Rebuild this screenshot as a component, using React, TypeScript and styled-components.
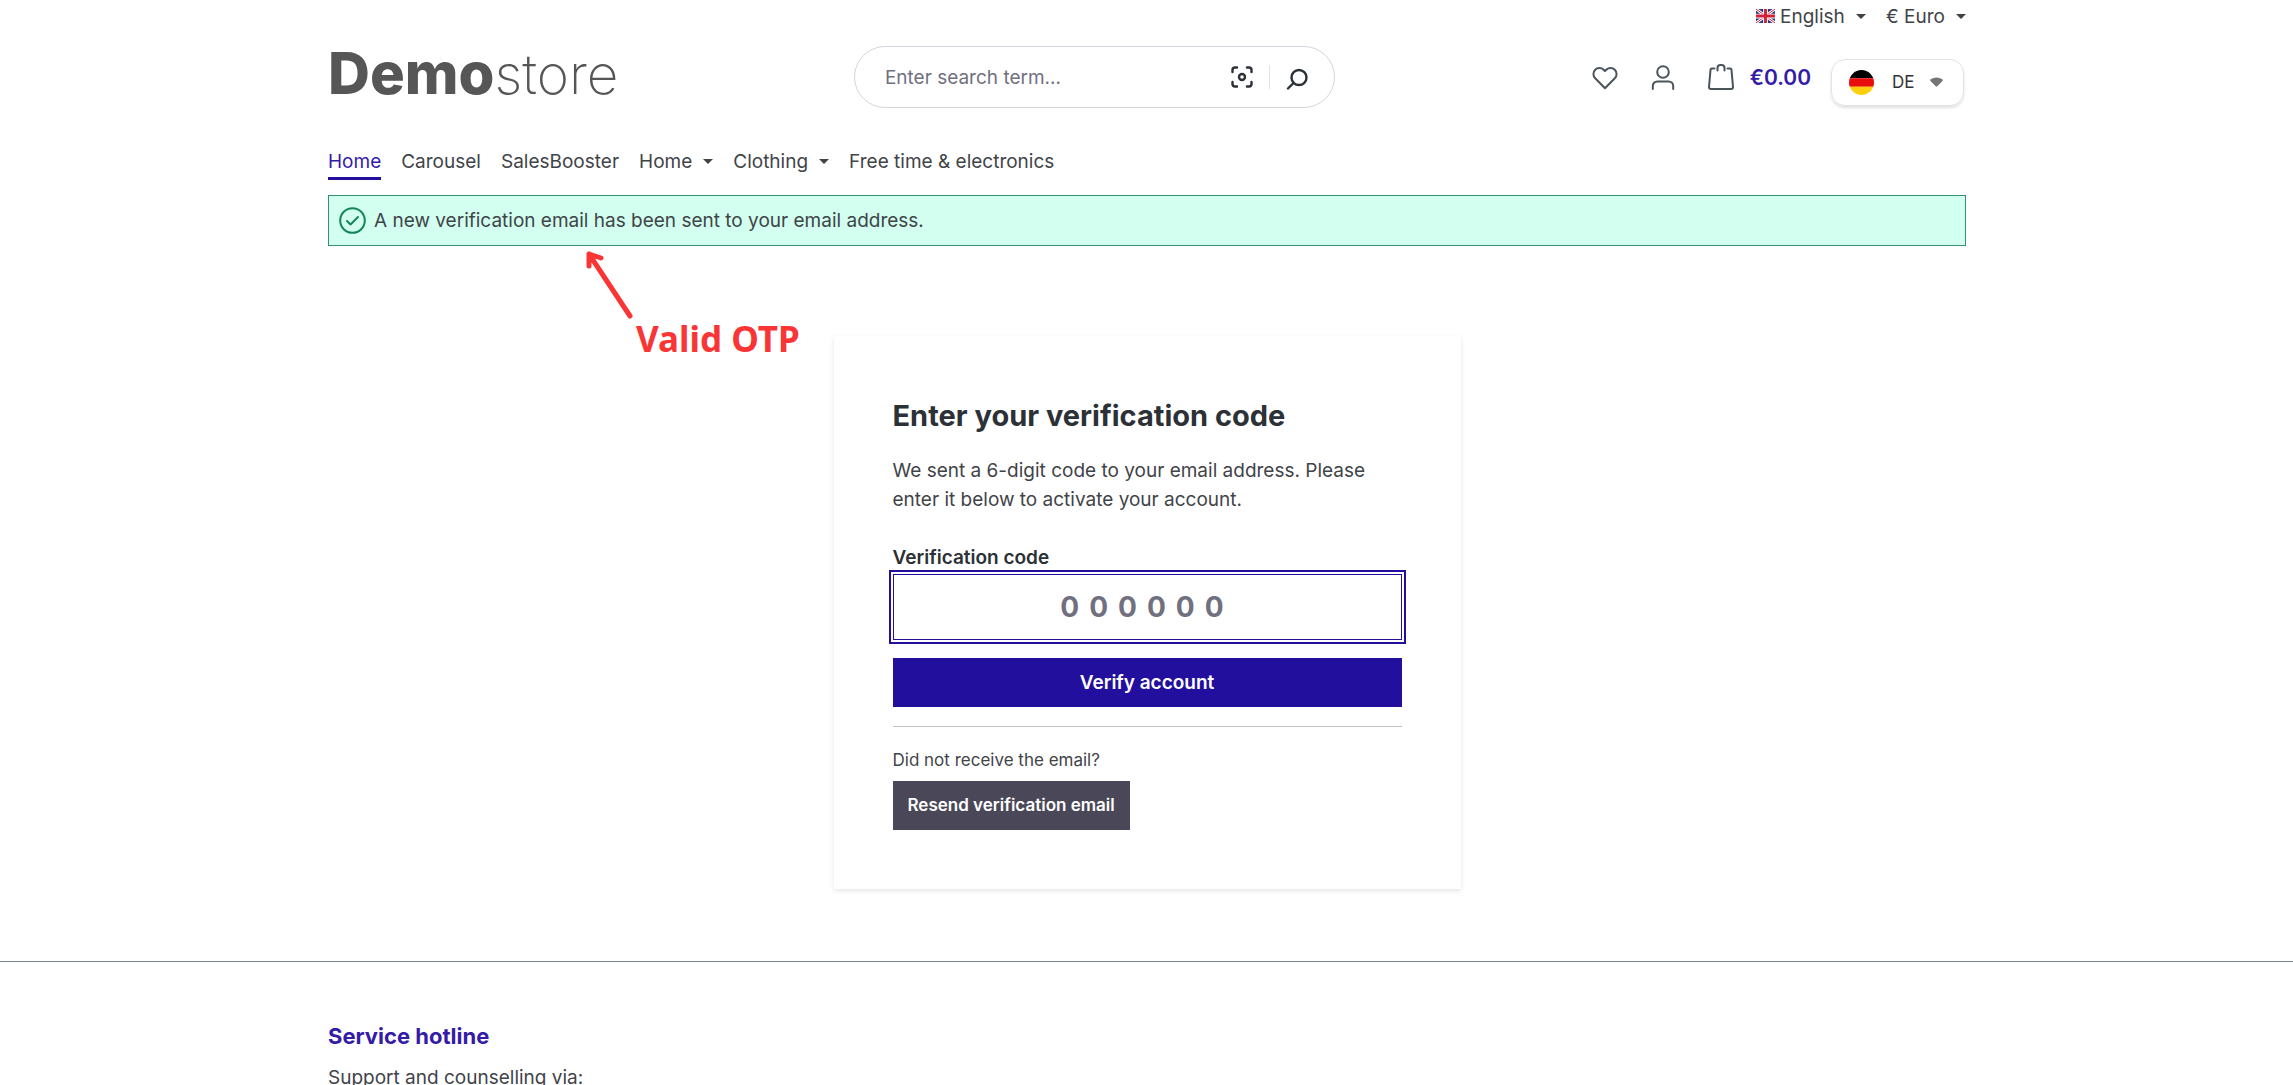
import React from 'react';
import styled, { createGlobalStyle } from 'styled-components';

const color = {
  text: '#2b3136',
  body: '#3f4449',
  primary: '#230f9e',
  link: '#341ba8',
  secondary: '#4a4858',
  muted: '#70707f',
  success: '#148556',
  red: '#f93535',
};

const GlobalStyle = createGlobalStyle`
  *, *::before, *::after { box-sizing: border-box; }
  body {
    margin: 0;
    background: #fff;
    color: ${color.text};
    font-family: Inter, "Liberation Sans", sans-serif;
    font-size: 19px;
    line-height: 29px;
  }
  button, input, select { font: inherit; color: inherit; }
  h1, h2, h3, p { margin: 0; }
`;

const Page = styled.div`
  height: 100vh;
  overflow-y: auto;
  scrollbar-width: none;
`;

const Container = styled.div`
  width: calc(100% - 40px);
  max-width: 1639px;
  margin: 0 auto;
  padding-left: 1px;
`;

const TopBar = styled.div`
  display: flex;
  justify-content: flex-end;
  gap: 20px;
  height: 32px;
  color: ${color.body};
`;

const InlineSelect = styled.label`
  display: flex;
  align-items: center;
  gap: 5px;
`;

const PlainSelect = styled.select`
  appearance: none;
  border: 0;
  padding: 0;
  background: none;
  cursor: pointer;
`;

const CaretIcon = styled.svg`
  width: 10px;
  height: 5px;
  margin-left: 6px;
  fill: currentColor;
`;

const Caret = () => (
  <CaretIcon viewBox="0 0 10 5" aria-hidden="true">
    <path d="M0 0h10L5 5z" />
  </CaretIcon>
);

const HeaderRow = styled.div`
  display: grid;
  grid-template-columns: minmax(0, 5fr) 481px minmax(0, 6fr);
  align-items: center;
  padding-top: 14px;
`;

const Logo = styled.a`
  align-self: start;
  color: #565656;
  font-size: 55px;
  font-weight: 200;
  line-height: 54px;
  text-decoration: none;
  b { font-size: 58px; font-weight: 800; }
`;

const Search = styled.form`
  display: flex;
  align-items: center;
  height: 62px;
  padding: 0 20px 0 30px;
  border: 1px solid #d5d5dd;
  border-radius: 31px;
`;

const SearchInput = styled.input`
  flex: 1;
  min-width: 0;
  border: 0;
  padding: 0;
  outline: 0;
  background: none;
  &::placeholder { color: ${color.muted}; opacity: 1; }
`;

const IconButton = styled.button`
  display: flex;
  align-items: center;
  justify-content: center;
  width: 34px;
  height: 34px;
  border: 0;
  padding: 0;
  background: none;
  cursor: pointer;
`;

const Divider = styled.span`
  width: 1px;
  height: 24px;
  margin: 0 10px;
  background: #e2e2e8;
`;

const Actions = styled.div`
  display: flex;
  align-items: center;
  justify-content: flex-end;
  gap: 24px;
  padding-right: 2px;
  color: #4a545b;
`;

const Cart = styled.button`
  display: flex;
  align-items: center;
  gap: 16px;
  border: 0;
  padding: 0 0 0 4px;
  background: none;
  color: inherit;
  cursor: pointer;
`;

const CartTotal = styled.span`
  color: ${color.link};
  font-size: 21px;
  font-weight: 600;
`;

const CountrySelect = styled.label`
  display: flex;
  align-items: center;
  height: 47px;
  margin: 10px 0 0 -4px;
  padding: 0 20px 0 17px;
  gap: 18px;
  border: 1px solid #e3e3e3;
  border-radius: 14px;
  box-shadow: 0 2px 3px rgba(0, 0, 0, 0.12);
  color: #333;
  font-size: 17px;
`;

const CountryValue = styled.span`
  display: flex;
  align-items: center;
  gap: 15px;
`;

const Nav = styled.nav`
  display: flex;
  gap: 20px;
  padding-top: 39px;
`;

const NavLink = styled.a<{ $active?: boolean }>`
  padding-bottom: 1px;
  border-bottom: 3px solid ${(p) => (p.$active ? color.primary : 'transparent')};
  color: ${(p) => (p.$active ? color.link : color.body)};
  text-decoration: none;
`;

const NavButton = styled.button`
  display: flex;
  align-items: center;
  gap: 5px;
  height: 29px;
  border: 0;
  padding: 0;
  background: none;
  color: ${color.body};
  cursor: pointer;
`;

const Alert = styled.div`
  display: flex;
  align-items: center;
  gap: 8px;
  margin-top: 15px;
  padding: 10px;
  border: 1px solid #32916e;
  background: #d2ffef;
  color: ${color.body};
`;

const Main = styled(Container).attrs({ as: 'main' })`
  position: relative;
  padding-top: 90px;
  padding-bottom: 72px;
`;

const Annotation = styled.div`
  position: absolute;
  top: 3px;
  left: 257px;
  display: flex;
  color: ${color.red};
  font: 700 35px/44px "Noto Sans", sans-serif;
  span { margin-top: 68px; }
`;

const Card = styled.section`
  width: 627px;
  max-width: 100%;
  margin: 0 auto;
  padding: 59px;
  box-shadow: 0 2px 5px rgba(0, 0, 0, 0.1);
`;

const Title = styled.h1`
  margin-bottom: 19px;
  font-size: 29px;
  font-weight: 700;
  line-height: 42px;
`;

const Intro = styled.p`
  margin-bottom: 29px;
  color: ${color.body};
`;

const CodeLabel = styled.label`
  display: block;
  margin-bottom: 2px;
  font-weight: 600;
`;

const CodeInput = styled.input`
  display: block;
  width: 100%;
  height: 66px;
  margin-bottom: 18px;
  border: 1px solid ${color.primary};
  border-radius: 0;
  outline: 2px solid ${color.primary};
  outline-offset: 2px;
  font-size: 28px;
  font-weight: 700;
  letter-spacing: 10px;
  text-align: center;
  &::placeholder { color: ${color.muted}; opacity: 1; }
`;

const Button = styled.button<{ $secondary?: boolean }>`
  width: ${(p) => (p.$secondary ? 'auto' : '100%')};
  height: 49px;
  padding: 0 15px;
  border: 0;
  background: ${(p) => (p.$secondary ? color.secondary : color.primary)};
  color: #fff;
  font-size: ${(p) => (p.$secondary ? 17 : 19)}px;
  font-weight: 600;
  cursor: pointer;
`;

const Rule = styled.hr`
  height: 1px;
  margin: 19px 0 20px;
  border: 0;
  background: #c2c2c6;
`;

const Hint = styled.p`
  margin-bottom: 8px;
  color: ${color.body};
  font-size: 17px;
  line-height: 26px;
`;

const Footer = styled.footer`
  padding-top: 60px;
  border-top: 1px solid #7b8796;
  color: ${color.body};
`;

const FooterTitle = styled.h2`
  margin-bottom: 12px;
  color: ${color.link};
  font-size: 22px;
  font-weight: 700;
  line-height: 29px;
`;

const UkFlag = () => (
  <svg width="19" height="14" viewBox="0 0 60 44" aria-hidden="true">
    <path fill="#26367d" d="M0 0h60v44H0z" />
    <path stroke="#fff" strokeWidth="9" d="M0 0l60 44M60 0L0 44" />
    <path stroke="#d0213a" strokeWidth="3" d="M0 0l60 44M60 0L0 44" />
    <path stroke="#fff" strokeWidth="15" d="M30 0v44M0 22h60" />
    <path stroke="#d0213a" strokeWidth="9" d="M30 0v44M0 22h60" />
  </svg>
);

const GermanFlag = () => (
  <svg width="25" height="25" viewBox="0 0 24 24" aria-hidden="true">
    <clipPath id="round-flag"><circle cx="12" cy="12" r="12" /></clipPath>
    <g clipPath="url(#round-flag)">
      <path d="M0 0h24v8H0z" />
      <path fill="#e90c0c" d="M0 8h24v8H0z" />
      <path fill="#fdd00b" d="M0 16h24v8H0z" />
    </g>
  </svg>
);

const Icon = ({ size = 26, width = 2, children }: { size?: number; width?: number; children: React.ReactNode }) => (
  <svg
    width={size}
    height={size}
    viewBox="0 0 26 26"
    fill="none"
    stroke="currentColor"
    strokeWidth={width}
    strokeLinecap="round"
    strokeLinejoin="round"
    aria-hidden="true"
  >
    {children}
  </svg>
);

export default function App() {
  return (
    <Page>
      <GlobalStyle />
      <Container as="header">
        <TopBar>
          <InlineSelect>
            <UkFlag />
            <PlainSelect aria-label="Language"><option>English</option></PlainSelect>
            <Caret />
          </InlineSelect>
          <InlineSelect>
            <PlainSelect aria-label="Currency"><option>€ Euro</option></PlainSelect>
            <Caret />
          </InlineSelect>
        </TopBar>
        <HeaderRow>
          <Logo href="#"><b>Demo</b>store</Logo>
          <Search role="search">
            <SearchInput type="search" aria-label="Search" placeholder="Enter search term..." />
            <IconButton type="button" aria-label="Search by image">
              <Icon width={2.4}>
                <path d="M3.500 8V6a2.500 2.500 0 0 1 2.500-2.500h2M18 3.500h2A2.500 2.500 0 0 1 22.500 6v2M22.500 18v2a2.500 2.500 0 0 1-2.500 2.500h-2M8 22.500H6A2.500 2.500 0 0 1 3.500 20v-2" />
                <circle cx="13" cy="13" r="3" />
              </Icon>
            </IconButton>
            <Divider />
            <IconButton type="submit" aria-label="Submit search">
              <Icon width={2.4}>
                <circle cx="15" cy="13.500" r="7.500" />
                <path d="M9.500 19l-5.500 5.500" />
              </Icon>
            </IconButton>
          </Search>
          <Actions>
            <IconButton type="button" aria-label="Wishlist">
              <Icon>
                <path d="M13 24.300L3.200 14.300a6.100 6.100 0 0 1 0-8.600 6 6 0 0 1 8.500 0L13 7l1.300-1.300a6 6 0 0 1 8.500 0 6.100 6.100 0 0 1 0 8.600z" />
              </Icon>
            </IconButton>
            <IconButton type="button" aria-label="Your account">
              <Icon>
                <circle cx="13" cy="8" r="5.800" />
                <path d="M2.800 25v-3a4.500 4.500 0 0 1 4.500-4.500h11.400a4.500 4.500 0 0 1 4.500 4.500v3" />
              </Icon>
            </IconButton>
            <Cart type="button">
              <Icon>
                <path d="M6.500 4.500H4a1.500 1.500 0 0 0-1.500 1.400L1 23a2 2 0 0 0 2 2h20a2 2 0 0 0 2-2L23.500 5.900A1.500 1.500 0 0 0 22 4.500H19.500M9.500 6.500V4a3 3 0 0 1 3-3h1a3 3 0 0 1 3 3v2.500" />
              </Icon>
              <CartTotal>€0.00</CartTotal>
            </Cart>
            <CountrySelect>
              <GermanFlag />
              <CountryValue>
                <PlainSelect aria-label="Country"><option>DE</option></PlainSelect>
                <svg width="13" height="10" viewBox="0 0 13 10" aria-hidden="true">
                  <path fill="#757575" d="M1 2Q6.500-1 12 2q1.500 1 0 2.600L7.500 9q-1 1-2 0L1 4.600Q-.5 3 1 2z" />
                </svg>
              </CountryValue>
            </CountrySelect>
          </Actions>
        </HeaderRow>
        <Nav>
          <NavLink href="#" $active>Home</NavLink>
          <NavLink href="#">Carousel</NavLink>
          <NavLink href="#">SalesBooster</NavLink>
          <NavButton type="button">Home<Caret /></NavButton>
          <NavButton type="button">Clothing<Caret /></NavButton>
          <NavLink href="#">Free time &amp; electronics</NavLink>
        </Nav>
        <Alert role="status">
          <svg width="27" height="27" viewBox="0 0 27 27" fill="none" stroke={color.success} strokeWidth="2" strokeLinecap="round" strokeLinejoin="round" aria-hidden="true">
            <circle cx="13.500" cy="13.500" r="12.300" />
            <path d="M8 14l3.500 3.500 7.500-7.500" />
          </svg>
          A new verification email has been sent to your email address.
        </Alert>
      </Container>
      <Main>
        <Annotation>
          <svg width="52" height="72" viewBox="0 0 52 72" fill="none" stroke="currentColor" strokeWidth="5" strokeLinecap="round" strokeLinejoin="round" aria-hidden="true">
            <path d="M46 67L5 5M5 17V5l12 4" />
          </svg>
          <span>Valid OTP</span>
        </Annotation>
        <Card>
          <Title>Enter your verification code</Title>
          <Intro>We sent a 6-digit code to your email address. Please enter it below to activate your account.</Intro>
          <CodeLabel htmlFor="code">Verification code</CodeLabel>
          <CodeInput id="code" inputMode="numeric" maxLength={6} placeholder="000000" />
          <Button type="submit">Verify account</Button>
          <Rule />
          <Hint>Did not receive the email?</Hint>
          <Button type="button" $secondary>Resend verification email</Button>
        </Card>
      </Main>
      <Footer>
        <Container>
          <FooterTitle>Service hotline</FooterTitle>
          <p>Support and counselling via:</p>
        </Container>
      </Footer>
    </Page>
  );
}
